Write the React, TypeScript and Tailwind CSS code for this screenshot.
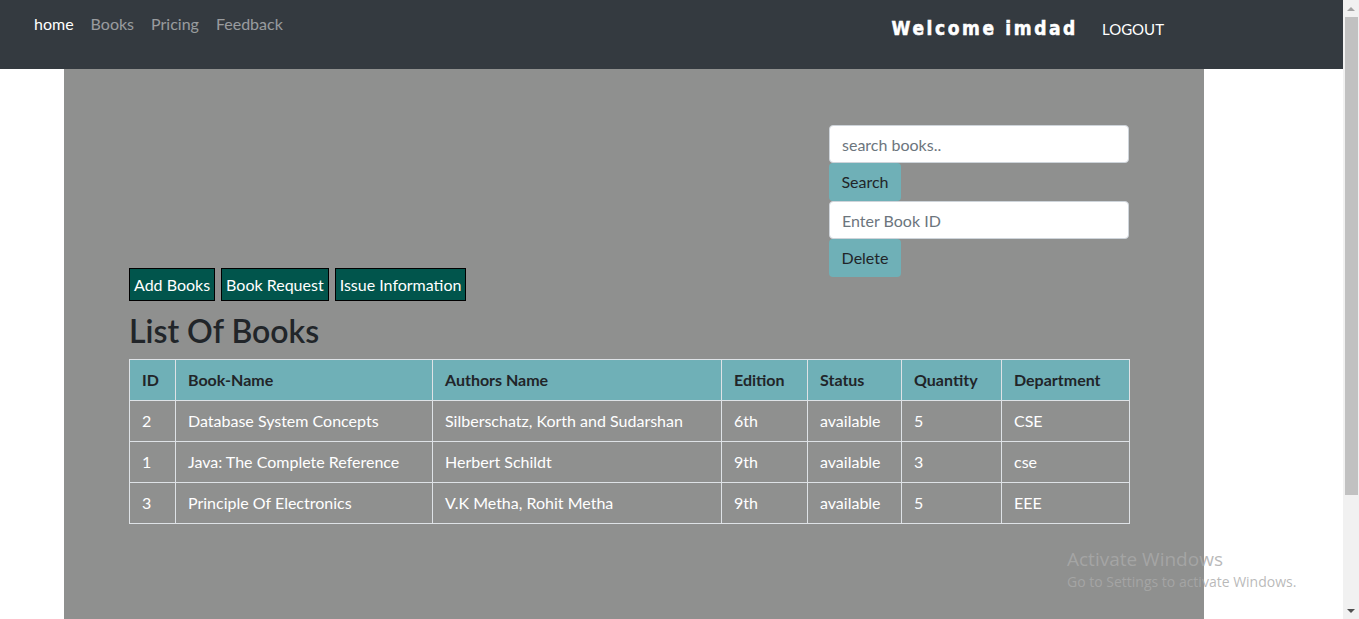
const books = [
  { id: 2, name: "Database System Concepts", authors: "Silberschatz, Korth and Sudarshan", edition: "6th", status: "available", qty: 5, dept: "CSE" },
  { id: 1, name: "Java: The Complete Reference", authors: "Herbert Schildt", edition: "9th", status: "available", qty: 3, dept: "cse" },
  { id: 3, name: "Principle Of Electronics", authors: "V.K Metha, Rohit Metha", edition: "9th", status: "available", qty: 5, dept: "EEE" },
];

const font = "font-['Lato',sans-serif]";

export default function App() {
  return (
    <div className={`relative flex h-[619px] w-[1359px] overflow-hidden bg-white ${font} text-[16px]`}>
      <div className="flex-1 flex flex-col">
        {/* navbar */}
        <nav className="h-[69px] bg-[#343a40] flex items-start justify-between pl-[34px] pr-[179px]">
          <ul className="flex gap-[17px] pt-[12px]">
            <li className="text-white">home</li>
            <li className="text-white/50">Books</li>
            <li className="text-white/50">Pricing</li>
            <li className="text-white/50">Feedback</li>
          </ul>
          <div className="flex items-center gap-[24px] pt-[14px]">
            <span className="font-['DejaVu_Sans_Condensed','DejaVu_Sans',sans-serif] font-bold text-[19px] tracking-[2.6px] text-white [-webkit-text-stroke:0.5px_white]">
              Welcome imdad
            </span>
            <span className="text-white text-[15px] pt-[2px]">LOGOUT</span>
          </div>
        </nav>

        {/* gray container */}
        <div className="ml-[64px] w-[1140px] flex-1 bg-[#8f908f] pl-[65px] pr-[75px] pt-[56px]">
          <div className="flex justify-between items-start">
            <div className="pt-[143px] flex gap-[6px]">
              <button className="h-[33px] px-[4px] bg-[#01554c] border border-black text-white">Add Books</button>
              <button className="h-[33px] px-[4px] bg-[#01554c] border border-black text-white">Book Request</button>
              <button className="h-[33px] px-[4px] bg-[#01554c] border border-black text-white">Issue Information</button>
            </div>
            <div className="w-[300px] flex flex-col items-start">
              <input
                className="w-full h-[38px] rounded-[4px] border border-[#ced4da] bg-white px-[12px] placeholder:text-[#6c757d] outline-none"
                placeholder="search books.."
              />
              <button className="h-[38px] w-[72px] rounded-[4px] bg-[#6fb0b7] text-[#212529]">Search</button>
              <input
                className="w-full h-[38px] rounded-[4px] border border-[#ced4da] bg-white px-[12px] placeholder:text-[#6c757d] outline-none"
                placeholder="Enter Book ID"
              />
              <button className="h-[38px] w-[72px] rounded-[4px] bg-[#6fb0b7] text-[#212529]">Delete</button>
            </div>
          </div>

          <h2 className="mt-[11px] mb-[9px] text-[32px] leading-[38px] font-semibold text-[#212529]">List Of Books</h2>

          <table className="w-[1000px] table-fixed border-collapse">
            <colgroup>
              <col className="w-[46px]" />
              <col className="w-[257px]" />
              <col className="w-[289px]" />
              <col className="w-[86px]" />
              <col className="w-[94px]" />
              <col className="w-[100px]" />
              <col className="w-[128px]" />
            </colgroup>
            <thead>
              <tr className="bg-[#6fb0b7] text-[#212529] text-left">
                {["ID", "Book-Name", "Authors Name", "Edition", "Status", "Quantity", "Department"].map((h) => (
                  <th key={h} className="border border-[#dee2e6] h-[41px] px-[12px] font-bold">{h}</th>
                ))}
              </tr>
            </thead>
            <tbody className="text-white">
              {books.map((b) => (
                <tr key={b.id}>
                  <td className="border border-[#dee2e6] h-[41px] px-[12px]">{b.id}</td>
                  <td className="border border-[#dee2e6] px-[12px]">{b.name}</td>
                  <td className="border border-[#dee2e6] px-[12px]">{b.authors}</td>
                  <td className="border border-[#dee2e6] px-[12px]">{b.edition}</td>
                  <td className="border border-[#dee2e6] px-[12px]">{b.status}</td>
                  <td className="border border-[#dee2e6] px-[12px]">{b.qty}</td>
                  <td className="border border-[#dee2e6] px-[12px]">{b.dept}</td>
                </tr>
              ))}
            </tbody>
          </table>
        </div>
      </div>

      {/* scrollbar */}
      <div className="w-[16px] bg-[#f1f1f1] flex flex-col items-center">
        <div className="h-[17px] flex items-center justify-center">
          <div className="w-0 h-0 border-l-[4px] border-r-[4px] border-b-[4px] border-l-transparent border-r-transparent border-b-[#a3a3a3]" />
        </div>
        <div className="w-[13px] ml-[1px] h-[478px] bg-[#c1c1c1]" />
        <div className="flex-1" />
        <div className="h-[17px] flex items-center justify-center">
          <div className="w-0 h-0 border-l-[4px] border-r-[4px] border-t-[4px] border-l-transparent border-r-transparent border-t-[#505050]" />
        </div>
      </div>

      {/* windows watermark */}
      <div className="absolute left-[1067px] top-[547px] text-[rgba(170,170,170,0.82)] font-['Open_Sans',sans-serif]">
        <div className="text-[19px] leading-[24px]">Activate Windows</div>
        <div className="text-[14px] leading-[22px]">Go to Settings to activate Windows.</div>
      </div>
    </div>
  );
}
